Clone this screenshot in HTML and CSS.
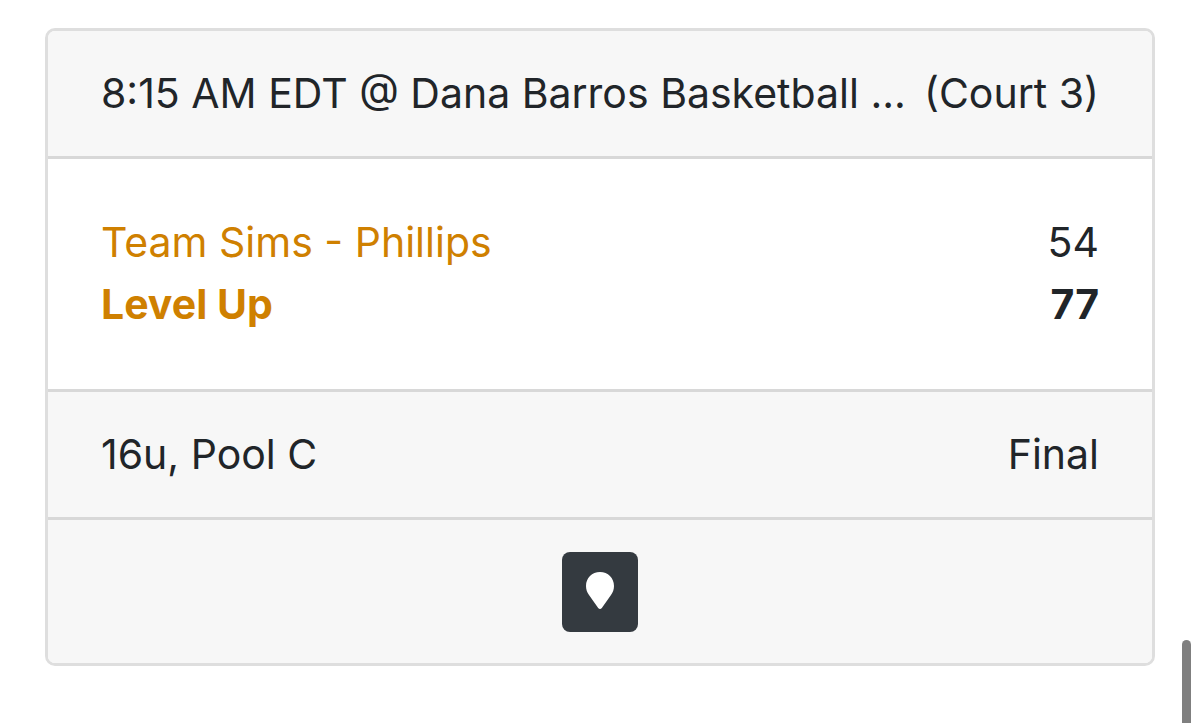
FILE: index.html
```
<!DOCTYPE html>
<html lang="en">
<head>
<meta charset="UTF-8">
<meta name="viewport" content="width=device-width, initial-scale=1">
<title>Game</title>
<link rel="stylesheet" href="styles.css">
</head>
<body>
<div class="card">
  <div class="card-header">
    <span class="venue">8:15 AM EDT @ Dana Barros Basketball ...</span>
    <span class="court">(Court 3)</span>
  </div>

  <div class="card-body">
    <div class="team">
      <a href="#">Team Sims - Phillips</a>
      <span>54</span>
    </div>
    <div class="team winner">
      <a href="#">Level Up</a>
      <span>77</span>
    </div>
  </div>

  <div class="card-footer">
    <span>16u, Pool C</span>
    <span>Final</span>
  </div>

  <div class="card-footer actions">
    <button type="button" class="btn-map" aria-label="Map">
      <svg width="28" height="37" viewBox="0 0 28 37" aria-hidden="true">
        <path d="M14 0C6 0 0 6 0 14C0 17.500 1.200 20.500 3 23L12 35.800Q14 38.200 16 35.800L25 23C26.800 20.500 28 17.500 28 14C28 6 22 0 14 0Z" fill="#fff"/>
      </svg>
    </button>
  </div>
</div>
<div class="scroll-thumb"></div>
</body>
</html>
```
FILE: styles.css
```
body{
  margin:0;
  padding:28px 45px;
  background:#fff;
  color:#212529;
  font-family:Inter, "Liberation Sans", sans-serif;
  font-size:41px;
  line-height:62px;
  overflow:hidden;
}
.card{
  border:3px solid #dedede;
  border-radius:10px;
  overflow:hidden;
}
.card-header, .card-footer, .team{
  display:flex;
  justify-content:space-between;
}
.card-header, .card-footer{
  padding:31px 53px 32px;
  background:#f7f7f7;
}
.card-header{
  gap:12px;
  border-bottom:3px solid #d8d8d8;
}
.card-footer{border-top:3px solid #d8d8d8;}
.venue{
  min-width:0;
  overflow:hidden;
  text-overflow:ellipsis;
  white-space:nowrap;
}
.court{flex:none;}
.card-body{padding:52px 53px 54px;}
.team a{color:#cf8000;text-decoration:none;}
.winner{font-weight:700;}
.card-footer.actions{
  justify-content:center;
  padding:32px 53px 31px;
}
.btn-map{
  display:flex;
  align-items:center;
  justify-content:center;
  width:76px;
  height:80px;
  padding:0 0 4px;
  border:0;
  border-radius:8px;
  background:#343a40;
}
.scroll-thumb{
  position:fixed;
  right:9px;
  bottom:-40px;
  width:9px;
  height:123px;
  border-radius:5px;
  background:#7f7f7f;
}
```
